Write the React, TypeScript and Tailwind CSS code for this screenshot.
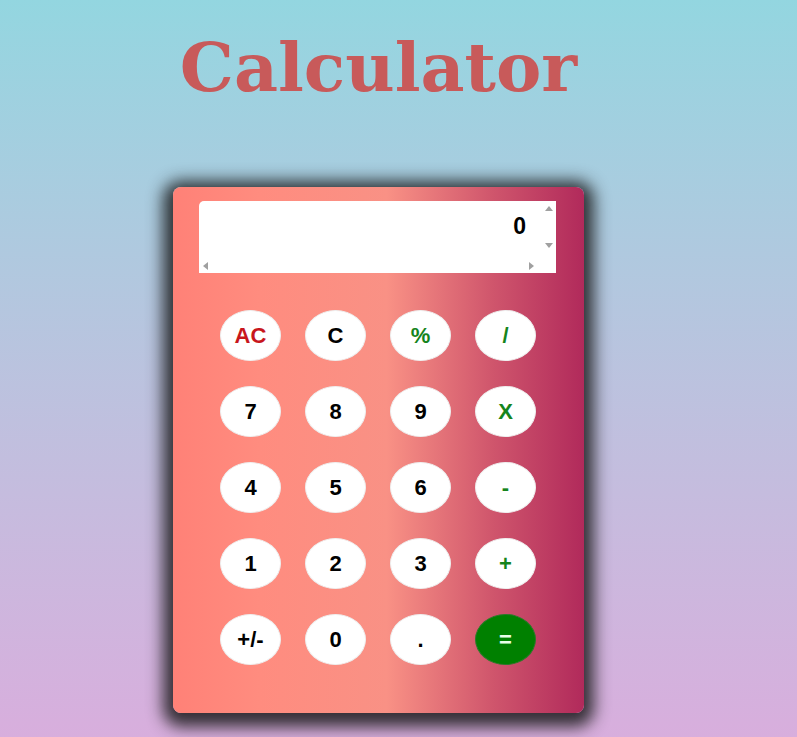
import React from "react";

type Key = { label: string; tone: "num" | "red" | "op" | "eq" };

const keys: Key[] = [
  { label: "AC", tone: "red" },
  { label: "C", tone: "num" },
  { label: "%", tone: "op" },
  { label: "/", tone: "op" },
  { label: "7", tone: "num" },
  { label: "8", tone: "num" },
  { label: "9", tone: "num" },
  { label: "X", tone: "op" },
  { label: "4", tone: "num" },
  { label: "5", tone: "num" },
  { label: "6", tone: "num" },
  { label: "-", tone: "op" },
  { label: "1", tone: "num" },
  { label: "2", tone: "num" },
  { label: "3", tone: "num" },
  { label: "+", tone: "op" },
  { label: "+/-", tone: "num" },
  { label: "0", tone: "num" },
  { label: ".", tone: "num" },
  { label: "=", tone: "eq" },
];

const toneClass: Record<Key["tone"], string> = {
  num: "bg-white text-black border-[#eee]",
  red: "bg-white text-[#c8161d] border-[#eee]",
  op: "bg-white text-[#15841c] border-[#eee]",
  eq: "bg-[#008000] text-[#e8ffe8] border-[#2a7a2a]",
};

// little grey scrollbar arrows, like a textarea's
const Up = () => (
  <span className="w-0 h-0 border-l-[4px] border-r-[4px] border-b-[5px] border-l-transparent border-r-transparent border-b-[#a0a0a0]" />
);
const Down = () => (
  <span className="w-0 h-0 border-l-[4px] border-r-[4px] border-t-[5px] border-l-transparent border-r-transparent border-t-[#a0a0a0]" />
);
const Left = () => (
  <span className="w-0 h-0 border-t-[4px] border-b-[4px] border-r-[5px] border-t-transparent border-b-transparent border-r-[#a0a0a0]" />
);
const Right = () => (
  <span className="w-0 h-0 border-t-[4px] border-b-[4px] border-l-[5px] border-t-transparent border-b-transparent border-l-[#a0a0a0]" />
);

const Display: React.FC<{ value: string }> = ({ value }) => (
  <div className="w-[357px] h-[72px] bg-white rounded-tl-[5px] flex flex-col">
    <div className="flex-1 flex">
      <div className="flex-1 pr-[15px] pt-[10px] text-right text-[23px] font-bold text-black leading-[30px]">
        {value}
      </div>
      <div className="w-[15px] flex flex-col items-center justify-between pt-[5px] pb-[10px]">
        <Up />
        <Down />
      </div>
    </div>
    <div className="h-[15px] w-[342px] flex items-center justify-between pl-[4px] pr-[7px]">
      <Left />
      <Right />
    </div>
  </div>
);

export default function App() {
  return (
    <div
      className="w-full min-h-[737px] bg-gradient-to-b from-[#93d6e0] to-[#d8aedd] overflow-hidden"
      style={{ fontFamily: '"Liberation Sans", Arial, sans-serif' }}
    >
      <div className="w-[757px] flex flex-col items-center">
        <h1
          className="mt-[27px] text-[68px] leading-[80px] font-bold text-[#c85a5a]"
          style={{ fontFamily: '"DejaVu Serif", serif' }}
        >
          Calculator
        </h1>
        <div className="mt-[80px] w-[411px] h-[526px] rounded-[8px] pt-[14px] pl-[26px] bg-[linear-gradient(to_right,#ff8177_0%,#ff8c7f_21%,#f99185_52%,#cf556c_78%,#b12a5b_100%)] shadow-[0_4px_16px_10px_rgba(25,25,25,0.85)]">
          <Display value="0" />
          <div className="mt-[37px] ml-[21px] grid grid-cols-[repeat(4,61px)] gap-x-[24px] gap-y-[25px]">
            {keys.map((k) => (
              <button
                key={k.label}
                className={`w-[61px] h-[51px] rounded-[50%] border text-[22px] font-bold flex items-center justify-center ${toneClass[k.tone]}`}
              >
                {k.label}
              </button>
            ))}
          </div>
        </div>
      </div>
    </div>
  );
}
